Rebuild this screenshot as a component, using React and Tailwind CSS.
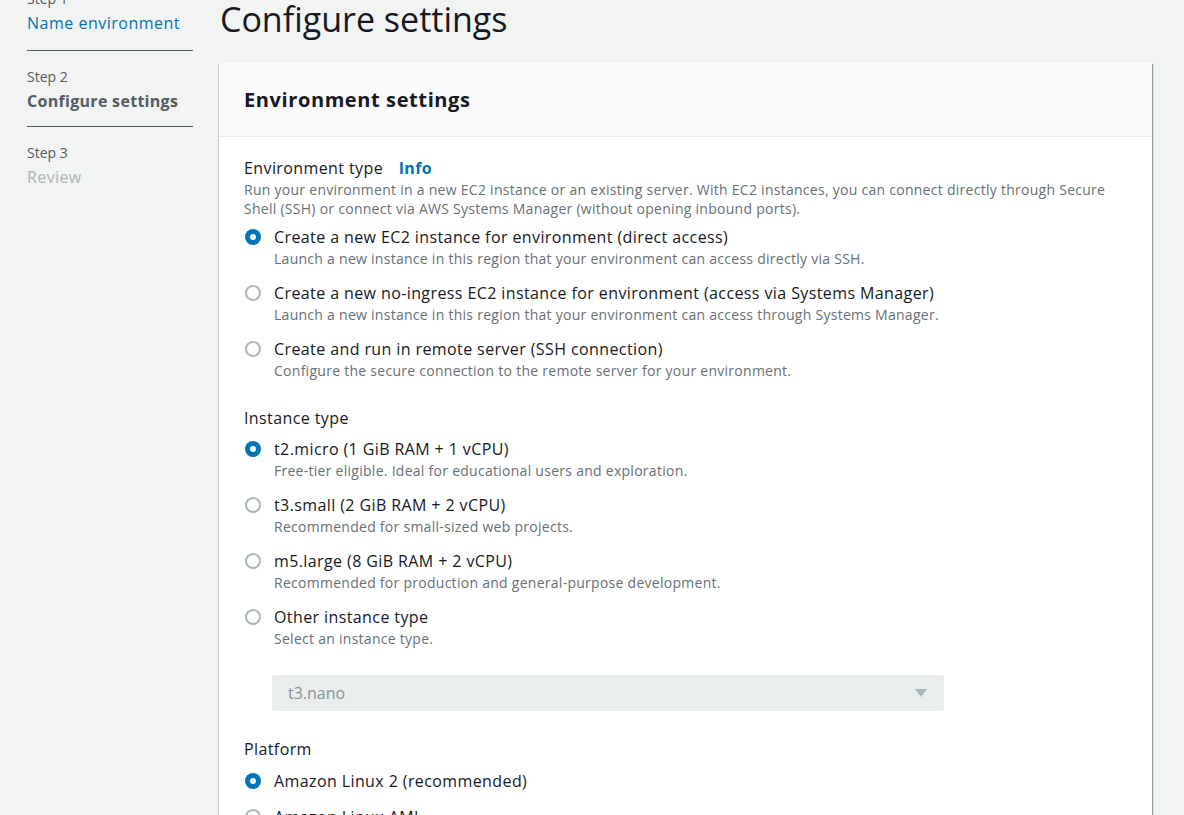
const envOptions = [
    {
        label: 'Create a new EC2 instance for environment (direct access)',
        desc: 'Launch a new instance in this region that your environment can access directly via SSH.',
        checked: true
    },
    {
        label: 'Create a new no-ingress EC2 instance for environment (access via Systems Manager)',
        desc: 'Launch a new instance in this region that your environment can access through Systems Manager.'
    },
    {
        label: 'Create and run in remote server (SSH connection)',
        desc: 'Configure the secure connection to the remote server for your environment.'
    }
];

const instanceOptions = [
    { label: 't2.micro (1 GiB RAM + 1 vCPU)', desc: 'Free-tier eligible. Ideal for educational users and exploration.', checked: true },
    { label: 't3.small (2 GiB RAM + 2 vCPU)', desc: 'Recommended for small-sized web projects.' },
    { label: 'm5.large (8 GiB RAM + 2 vCPU)', desc: 'Recommended for production and general-purpose development.' },
    { label: 'Other instance type', desc: 'Select an instance type.' }
];

function Radio({ checked }) {
    if (checked) {
        return (
            <span className="mt-[4px] w-4 h-4 rounded-full bg-[#0073bb] flex items-center justify-center shrink-0">
                <span className="w-[6px] h-[6px] rounded-full bg-white" />
            </span>
        );
    }
    return <span className="mt-[4px] w-4 h-4 rounded-full border-2 border-[#aab7b8] bg-white shrink-0" />;
}

function RadioOption({ label, desc, checked }) {
    return (
        <div className="flex gap-[13px] pl-px">
            <Radio checked={checked} />
            <div>
                <div className="text-[16px] leading-6 tracking-[0.4px] text-[#16191f]">{label}</div>
                {desc && <div className="text-[14px] leading-5 tracking-[0.27px] text-[#687078]">{desc}</div>}
            </div>
        </div>
    );
}

function Sidebar() {
    return (
        <div className="w-[166px] ml-[27px] shrink-0 text-[14px] -mt-[11px]">
            <div className="pb-[15px] border-b border-[#545b64]">
                <div className="text-[#545b64] leading-5">Step 1</div>
                <div className="mt-[2px] text-[#0073bb] text-[16px] leading-6 tracking-[0.5px]">Name environment</div>
            </div>
            <div className="pt-[16px] pb-[13px] border-b border-[#545b64]">
                <div className="text-[#545b64] leading-5">Step 2</div>
                <div className="mt-[2px] text-[#545b64] text-[16px] leading-6 font-bold tracking-[0.3px]">Configure settings</div>
            </div>
            <div className="pt-[16px]">
                <div className="text-[#545b64] leading-5">Step 3</div>
                <div className="mt-[2px] text-[#aab7b8] text-[16px] leading-6 tracking-[0.4px]">Review</div>
            </div>
        </div>
    );
}

export default function App() {
    return (
        <div className="bg-[#f2f3f3] flex overflow-hidden h-[815px]" style={{ fontFamily: '"Open Sans", Arial, sans-serif' }}>
            <Sidebar />
            <div className="flex-1 ml-[26px] mr-[32px]">
                <h1 className="text-[34px] leading-[40px] text-[#16191f] ml-px -mt-px">Configure settings</h1>
                <div className="mt-[24px] bg-white shadow-[1px_1px_1px_0_rgba(0,28,36,0.3),1px_1px_1px_0_rgba(0,28,36,0.15),-1px_1px_1px_0_rgba(0,28,36,0.15)]">
                    <div className="bg-[#fafafa] border-b border-[#eaeded] h-[74px] flex items-center px-[25px]">
                        <h2 className="text-[20px] font-bold text-[#16191f] tracking-[0.6px]">Environment settings</h2>
                    </div>
                    <div className="px-[25px] pt-[19px]">
                        <div className="text-[16px] leading-6 tracking-[0.4px] text-[#16191f]">
                            Environment type <span className="ml-[11px] text-[#0073bb] font-bold">Info</span>
                        </div>
                        <p className="text-[14px] leading-[19px] tracking-[0.27px] text-[#687078]">
                            Run your environment in a new EC2 instance or an existing server. With EC2 instances, you can connect directly through Secure Shell (SSH) or connect via AWS Systems Manager (without opening inbound ports).
                        </p>
                        <div className="mt-[7px] flex flex-col gap-[12px]">
                            {envOptions.map((o) => (
                                <RadioOption key={o.label} {...o} />
                            ))}
                        </div>

                        <div className="mt-[25px] text-[16px] leading-6 tracking-[0.4px] text-[#16191f]">Instance type</div>
                        <div className="mt-[7px] flex flex-col gap-[12px]">
                            {instanceOptions.map((o) => (
                                <RadioOption key={o.label} {...o} />
                            ))}
                        </div>
                        <div className="ml-[28px] mt-[26px] w-[672px] h-[36px] rounded-[2px] bg-[#eaeded] flex items-center justify-between pl-[16px] pr-[16px]">
                            <span className="text-[16px] text-[#879596]">t3.nano</span>
                            <svg width="14" height="10" viewBox="0 0 14 10">
                                <path d="M1 1h12L7 9z" fill="#aab7b8" />
                            </svg>
                        </div>

                        <div className="mt-[26px] text-[16px] leading-6 tracking-[0.4px] text-[#16191f]">Platform</div>
                        <div className="mt-[8px] flex flex-col gap-[12px]">
                            <RadioOption label="Amazon Linux 2 (recommended)" checked />
                            <RadioOption label="Amazon Linux AMI" />
                        </div>
                    </div>
                </div>
            </div>
        </div>
    );
}
